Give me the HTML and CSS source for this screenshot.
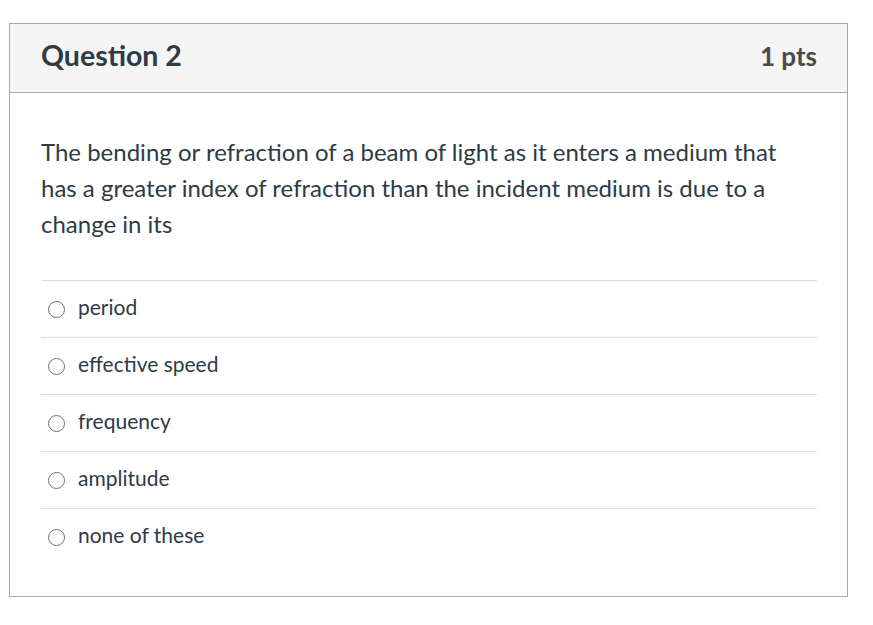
FILE: index.html
```html
<!DOCTYPE html>
<html>
<head>
<meta charset="utf-8">
<link rel="stylesheet" href="styles.css">
</head>
<body>
<div class="card">
  <div class="header">
    <h2 class="title">Question 2</h2>
    <span class="pts">1 pts</span>
  </div>
  <div class="content">
    <p class="question">The bending or refraction of a beam of light as it enters a medium that has a greater index of refraction than the incident medium is due to a change in its</p>
    <div class="answers">
      <label class="answer"><span class="radio"></span><span>period</span></label>
      <label class="answer"><span class="radio"></span><span>effective speed</span></label>
      <label class="answer"><span class="radio"></span><span>frequency</span></label>
      <label class="answer"><span class="radio"></span><span>amplitude</span></label>
      <label class="answer"><span class="radio"></span><span>none of these</span></label>
    </div>
  </div>
</div>
</body>
</html>
```
FILE: styles.css
```css
html, body {
  margin: 0;
  padding: 0;
  background: #fff;
}
body {
  padding: 23px 0 0 9px;
  font-family: Lato, "Noto Sans", sans-serif;
  color: #2d3b45;
}
.card {
  width: 837px;
  height: 572px;
  border: 1px solid #a8a8a8;
  box-sizing: content-box;
}
.header {
  display: flex;
  justify-content: space-between;
  align-items: center;
  height: 68px;
  background: #f5f5f5;
  border-bottom: 1px solid #aaaaaa;
  padding: 0 30px 0 31px;
}
.title {
  margin: 0;
  font-size: 28.5px;
  line-height: 1;
  font-weight: 700;
  color: #2d3b45;
  position: relative;
  top: -3px;
}
.pts {
  font-size: 26px;
  line-height: 1;
  font-weight: 700;
  color: #4a4a4a;
  position: relative;
  top: -2px;
}
.content {
  padding: 0 30px 0 31px;
}
.question {
  margin: 0;
  padding-top: 41px;
  font-size: 24px;
  line-height: 36px;
}
.answers {
  margin-top: 38px;
  display: flex;
  flex-direction: column;
}
.answer {
  display: flex;
  align-items: center;
  gap: 13px;
  height: 56px;
  box-sizing: content-box;
  border-top: 1px solid #dcdcdc;
  padding-left: 7px;
  font-size: 21px;
}
.answer > span:last-child {
  position: relative;
  top: -3px;
}
.radio {
  width: 15px;
  height: 15px;
  border: 1px solid #6f6f6f;
  border-radius: 50%;
  flex: none;
}
```
